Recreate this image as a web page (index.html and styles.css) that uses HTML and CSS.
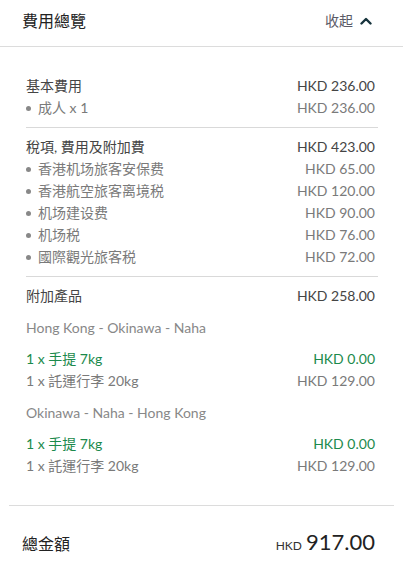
FILE: index.html
```html
<!DOCTYPE html>
<html lang="zh-Hant">
<head>
<meta charset="utf-8">
<link rel="stylesheet" href="styles.css">
</head>
<body>
<div class="panel">
  <div class="header">
    <div class="title">費用總覽</div>
    <div class="toggle">收起
      <svg class="caret" width="12" height="8" viewBox="0 0 12 8"><path d="M1.5 6.5 L6 2 L10.5 6.5" fill="none" stroke="#17343d" stroke-width="2.4" stroke-linecap="round" stroke-linejoin="round"/></svg>
    </div>
  </div>
  <div class="content">
    <div class="section">
      <div class="row main"><span>基本費用</span><span>HKD 236.00</span></div>
      <div class="row sub"><span><i class="dot"></i>成人 x 1</span><span>HKD 236.00</span></div>
    </div>
    <div class="section">
      <div class="row main"><span>稅項, 費用及附加費</span><span>HKD 423.00</span></div>
      <div class="row sub"><span><i class="dot"></i>香港机场旅客安保费</span><span>HKD 65.00</span></div>
      <div class="row sub"><span><i class="dot"></i>香港航空旅客离境税</span><span>HKD 120.00</span></div>
      <div class="row sub"><span><i class="dot"></i>机场建设费</span><span>HKD 90.00</span></div>
      <div class="row sub"><span><i class="dot"></i>机场税</span><span>HKD 76.00</span></div>
      <div class="row sub"><span><i class="dot"></i>國際觀光旅客税</span><span>HKD 72.00</span></div>
    </div>
    <div class="section last">
      <div class="row main"><span>附加產品</span><span>HKD 258.00</span></div>
      <div class="route">Hong Kong - Okinawa - Naha</div>
      <div class="row green"><span>1 x 手提 7kg</span><span>HKD 0.00</span></div>
      <div class="row sub"><span>1 x 託運行李 20kg</span><span>HKD 129.00</span></div>
      <div class="route">Okinawa - Naha - Hong Kong</div>
      <div class="row green"><span>1 x 手提 7kg</span><span>HKD 0.00</span></div>
      <div class="row sub"><span>1 x 託運行李 20kg</span><span>HKD 129.00</span></div>
    </div>
  </div>
  <div class="footer">
    <div class="total">
      <span class="total-label">總金額</span>
      <span class="total-amount"><span class="cur">HKD</span> <span class="num">917.00</span></span>
    </div>
  </div>
</div>
</body>
</html>
```

FILE: styles.css
```css
html, body {
  margin: 0;
  padding: 0;
  background: #ffffff;
}
body {
  font-family: Lato, "Noto Sans CJK TC", sans-serif;
  color: #333333;
  width: 403px;
}
.header {
  border-bottom: 1px solid #dcdcdc;
  display: flex;
  justify-content: space-between;
  align-items: center;
  padding: 0 31px 0 22px;
  box-sizing: border-box;
  height: 47px;
}
.title {
  font-size: 16px;
  line-height: 22px;
  color: #222;
  margin-top: -4px;
}
.toggle {
  font-size: 14px;
  line-height: 20px;
  color: #5a5a66;
  display: flex;
  align-items: center;
  gap: 7px;
  margin-top: -4px;
}
.caret { display: block; margin-top: -1px; }
.content {
  padding: 28px 25px 0 26px;
}
.section {
  border-bottom: 1px solid #d9d9d9;
  padding: 8px 0;
}
.section:first-child { padding-top: 0; }
.section.last {
  border-bottom: none;
  padding-bottom: 28px;
}
.row {
  display: flex;
  justify-content: space-between;
  height: 22px;
  line-height: 22px;
  font-size: 14px;
  padding-right: 3px;
}
.row.main { color: #454545; }
.row.sub { color: #7a7a7a; }
.row.green { color: #1b8a4c; margin-top: 9px; }
.dot {
  display: inline-block;
  width: 5px;
  height: 5px;
  border-radius: 50%;
  background: #888;
  margin: 0 7px 2px 0;
  vertical-align: middle;
}
.route {
  font-size: 14px;
  color: #888;
  height: 22px;
  line-height: 22px;
  margin-top: 10px;
}
.footer {
  margin: 0 9px;
  border-top: 1px solid #dcdcdc;
}
.total {
  display: flex;
  justify-content: space-between;
  align-items: baseline;
  padding: 22px 19px 20px 13px;
}
.total-label {
  font-size: 16px;
  color: #222;
}
.cur {
  font-size: 12px;
  color: #333;
}
.num {
  font-size: 22px;
  color: #222;
}
```
